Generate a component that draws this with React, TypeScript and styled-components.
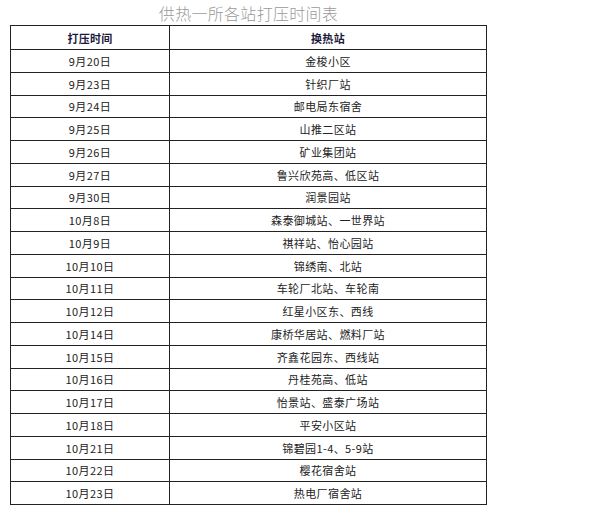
import styled, { createGlobalStyle } from "styled-components";

const GlobalStyle = createGlobalStyle`
  html, body {
    margin: 0;
    padding: 0;
    background: #ffffff;
  }
  body {
    font-family: "Noto Sans CJK SC", "Noto Sans", sans-serif;
  }
`;

const Page = styled.div`
  padding-left: 10px;
  width: 477px;
`;

const Title = styled.h1`
  margin: 0;
  box-sizing: border-box;
  height: 25px;
  padding-top: 2px;
  line-height: 23px;
  text-align: center;
  font-size: 16px;
  font-weight: 300;
  letter-spacing: 0.3px;
  color: #9a9a9a;
`;

const Table = styled.table`
  width: 477px;
  border-collapse: collapse;
  table-layout: fixed;
`;

const HeadCell = styled.th<{ $wide?: boolean }>`
  width: ${(p) => (p.$wide ? "auto" : "158px")};
  height: 23px;
  padding: 0;
  border: 1px solid #222;
  font-size: 11px;
  font-weight: 700;
  letter-spacing: 0.3px;
  color: #1c1a3c;
  text-align: center;
  vertical-align: middle;
`;

const Cell = styled.td`
  height: 21.75px;
  padding: 0;
  border: 1px solid #222;
  font-size: 11px;
  letter-spacing: 0.4px;
  color: #222;
  text-align: center;
  vertical-align: middle;
`;

const rows: [string, string][] = [
  ["9月20日", "金梭小区"],
  ["9月23日", "针织厂站"],
  ["9月24日", "邮电局东宿舍"],
  ["9月25日", "山推二区站"],
  ["9月26日", "矿业集团站"],
  ["9月27日", "鲁兴欣苑高、低区站"],
  ["9月30日", "润景园站"],
  ["10月8日", "森泰御城站、一世界站"],
  ["10月9日", "祺祥站、怡心园站"],
  ["10月10日", "锦绣南、北站"],
  ["10月11日", "车轮厂北站、车轮南"],
  ["10月12日", "红星小区东、西线"],
  ["10月14日", "康桥华居站、燃料厂站"],
  ["10月15日", "齐鑫花园东、西线站"],
  ["10月16日", "丹桂苑高、低站"],
  ["10月17日", "怡景站、盛泰广场站"],
  ["10月18日", "平安小区站"],
  ["10月21日", "锦碧园1-4、5-9站"],
  ["10月22日", "樱花宿舍站"],
  ["10月23日", "热电厂宿舍站"],
];

const App = () => {
  return (
    <>
      <GlobalStyle />
      <Page>
        <Title>供热一所各站打压时间表</Title>
        <Table>
          <thead>
            <tr>
              <HeadCell>打压时间</HeadCell>
              <HeadCell $wide>换热站</HeadCell>
            </tr>
          </thead>
          <tbody>
            {rows.map(([date, station]) => (
              <tr key={date}>
                <Cell>{date}</Cell>
                <Cell>{station}</Cell>
              </tr>
            ))}
          </tbody>
        </Table>
      </Page>
    </>
  );
};

export default App;
